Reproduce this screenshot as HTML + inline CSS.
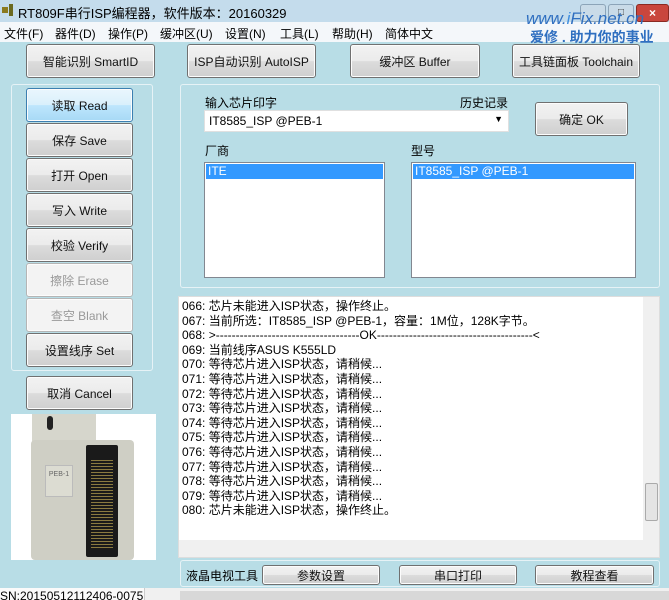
<!DOCTYPE html>
<html><head><meta charset="utf-8"><style>
*{box-sizing:border-box;margin:0;padding:0}
body{width:669px;height:600px;overflow:hidden;background:#b8dde6;font-family:"Liberation Sans","Noto Sans CJK SC",sans-serif;font-size:12px;color:#000;position:relative}
.a{position:absolute}
.m{position:absolute;top:25px;font-size:12px;white-space:nowrap}
.btn{position:absolute;border:1px solid #707070;border-radius:3px;background:linear-gradient(#f2f2f2,#ebebeb 50%,#dcdcdc 51%,#cfcfcf);display:flex;align-items:center;justify-content:center;font-size:12px;color:#111;box-shadow:inset 0 0 0 1px #fcfcfc}
.dis{color:#999;background:#f3f3f3;border-color:#b5b5b5}
.sel{background:linear-gradient(#eaf6fd,#d9f0fc 50%,#bee6fd 51%,#a7d9f5);border-color:#3c7fb1}
.panel{position:absolute;border:1px solid #e6f2f6;border-radius:3px}
.box{position:absolute;background:#fff;border:1px solid #828790}
.log div{height:14.6px;line-height:14.6px;white-space:nowrap;font-size:12px}
</style></head><body>
<div class="a" style="left:0;top:0;width:669px;height:22px;background:#c4dcec"></div>
<div class="a" style="left:2px;top:7px;width:6px;height:6px;background:#8a7a1e"></div>
<div class="a" style="left:9px;top:4px;width:4px;height:12px;background:#6b6a20"></div>
<div class="a" style="left:18px;top:3px;font-size:13px">RT809F串行ISP编程器，软件版本：20160329</div>
<div class="a" style="left:580px;top:4px;width:26px;height:18px;background:#c9dbe8;border:1px solid #8ca4b8;border-radius:3px"></div>
<div class="a" style="left:608px;top:4px;width:26px;height:18px;background:#c9dbe8;border:1px solid #8ca4b8;border-radius:3px;text-align:center;font-size:10px;line-height:16px;color:#333">□</div>
<div class="a" style="left:636px;top:4px;width:33px;height:18px;background:#c9463d;border:1px solid #8a2a22;border-radius:3px;color:#fff;text-align:center;font-weight:bold;line-height:16px">×</div>
<div class="a" style="left:0;top:22px;width:669px;height:20px;background:#f4f7fa"></div>
<div class="m" style="left:4px">文件(F)</div>
<div class="m" style="left:55px">器件(D)</div>
<div class="m" style="left:108px">操作(P)</div>
<div class="m" style="left:160px">缓冲区(U)</div>
<div class="m" style="left:225px">设置(N)</div>
<div class="m" style="left:280px">工具(L)</div>
<div class="m" style="left:332px">帮助(H)</div>
<div class="m" style="left:385px">简体中文</div>
<div class="a" style="left:526px;top:9px;font-size:17px;font-style:italic;color:#2f6fc0;white-space:nowrap">www.<span style="color:#3f8fe0">i</span>Fix.net.cn</div>
<div class="a" style="left:530px;top:27px;font-size:14px;font-weight:bold;color:#2f6fc0;white-space:nowrap">爱修 . 助力你的事业</div>
<div class="btn" style="left:26px;top:44px;width:129px;height:34px">智能识别 SmartID</div>
<div class="btn" style="left:187px;top:44px;width:129px;height:34px">ISP自动识别 AutoISP</div>
<div class="btn" style="left:350px;top:44px;width:130px;height:34px">缓冲区 Buffer</div>
<div class="btn" style="left:512px;top:44px;width:128px;height:34px">工具链面板 Toolchain</div>
<div class="panel" style="left:11px;top:84px;width:142px;height:287px"></div>
<div class="btn sel" style="left:26px;top:88px;width:107px;height:34px">读取 Read</div>
<div class="btn" style="left:26px;top:123px;width:107px;height:34px">保存 Save</div>
<div class="btn" style="left:26px;top:158px;width:107px;height:34px">打开 Open</div>
<div class="btn" style="left:26px;top:193px;width:107px;height:34px">写入 Write</div>
<div class="btn" style="left:26px;top:228px;width:107px;height:34px">校验 Verify</div>
<div class="btn dis" style="left:26px;top:263px;width:107px;height:34px">擦除 Erase</div>
<div class="btn dis" style="left:26px;top:298px;width:107px;height:34px">查空 Blank</div>
<div class="btn" style="left:26px;top:333px;width:107px;height:34px">设置线序 Set</div>
<div class="btn" style="left:26px;top:376px;width:107px;height:34px">取消 Cancel</div>
<div class="a" style="left:11px;top:414px;width:145px;height:146px;background:#fff"></div>
<div class="a" style="left:32px;top:414px;width:64px;height:30px;background:#d6d6cc"></div>
<div class="a" style="left:31px;top:440px;width:103px;height:120px;background:#cfcfc5;border-radius:4px"></div>
<div class="a" style="left:45px;top:465px;width:28px;height:32px;background:#dcdcd2;border:1px solid #bbb;font-size:7px;text-align:center;color:#666;padding-top:5px">PEB-1</div>
<div class="a" style="left:86px;top:445px;width:32px;height:112px;background:#1a1a1a;border-radius:2px"></div>
<div class="a" style="left:91px;top:458px;width:22px;height:92px;background:repeating-linear-gradient(#1a1a1a 0 2px,#8a7a40 2px 3px)"></div>
<div class="a" style="left:47px;top:416px;width:6px;height:14px;background:#222;border-radius:3px"></div>
<div class="panel" style="left:180px;top:84px;width:480px;height:204px"></div>
<div class="a" style="left:205px;top:94px">输入芯片印字</div>
<div class="a" style="left:460px;top:94px">历史记录</div>
<div class="box" style="left:204px;top:110px;width:305px;height:22px;border-color:#e0e0e0;padding:3px 4px">IT8585_ISP @PEB-1<span style="position:absolute;right:5px;top:3px;font-size:9px">▼</span></div>
<div class="btn" style="left:535px;top:102px;width:93px;height:34px">确定 OK</div>
<div class="a" style="left:205px;top:142px">厂商</div>
<div class="a" style="left:411px;top:142px">型号</div>
<div class="box" style="left:204px;top:162px;width:181px;height:116px"><div style="margin:1px;background:#3399ff;color:#fff;height:15px;padding-left:2px;line-height:15px">ITE</div></div>
<div class="box" style="left:411px;top:162px;width:225px;height:116px"><div style="margin:1px;background:#3399ff;color:#fff;height:15px;padding-left:2px;line-height:15px">IT8585_ISP @PEB-1</div></div>
<div class="box log" style="left:178px;top:296px;width:482px;height:262px;border-color:#ddd;padding:2px 0 0 3px">
<div>066: 芯片未能进入ISP状态，操作终止。</div>
<div>067: 当前所选：IT8585_ISP @PEB-1，容量：1M位，128K字节。</div>
<div>068: &gt;------------------------------------OK---------------------------------------&lt;</div>
<div>069: 当前线序ASUS K555LD</div>
<div>070: 等待芯片进入ISP状态，请稍候...</div>
<div>071: 等待芯片进入ISP状态，请稍候...</div>
<div>072: 等待芯片进入ISP状态，请稍候...</div>
<div>073: 等待芯片进入ISP状态，请稍候...</div>
<div>074: 等待芯片进入ISP状态，请稍候...</div>
<div>075: 等待芯片进入ISP状态，请稍候...</div>
<div>076: 等待芯片进入ISP状态，请稍候...</div>
<div>077: 等待芯片进入ISP状态，请稍候...</div>
<div>078: 等待芯片进入ISP状态，请稍候...</div>
<div>079: 等待芯片进入ISP状态，请稍候...</div>
<div>080: 芯片未能进入ISP状态，操作终止。</div>
</div>
<div class="a" style="left:643px;top:297px;width:16px;height:260px;background:#f0f0f0"></div>
<div class="a" style="left:645px;top:483px;width:13px;height:38px;background:#e4e4e4;border:1px solid #aaa;border-radius:2px"></div>
<div class="a" style="left:179px;top:540px;width:464px;height:17px;background:#f0f0f0"></div>
<div class="panel" style="left:180px;top:560px;width:480px;height:27px"></div>
<div class="a" style="left:186px;top:567px">液晶电视工具</div>
<div class="btn" style="left:262px;top:565px;width:118px;height:20px">参数设置</div>
<div class="btn" style="left:399px;top:565px;width:118px;height:20px">串口打印</div>
<div class="btn" style="left:535px;top:565px;width:119px;height:20px">教程查看</div>
<div class="a" style="left:0;top:588px;width:669px;height:12px;background:#f0f0f0"></div>
<div class="a" style="left:0;top:588px;width:145px;height:12px;background:#fafafa;border-right:1px solid #ccc;font-size:12px;line-height:16px;overflow:hidden;white-space:nowrap">SN:20150512112406-0075</div>
<div class="a" style="left:180px;top:591px;width:489px;height:9px;background:#d8d8d8"></div>
</body></html>
